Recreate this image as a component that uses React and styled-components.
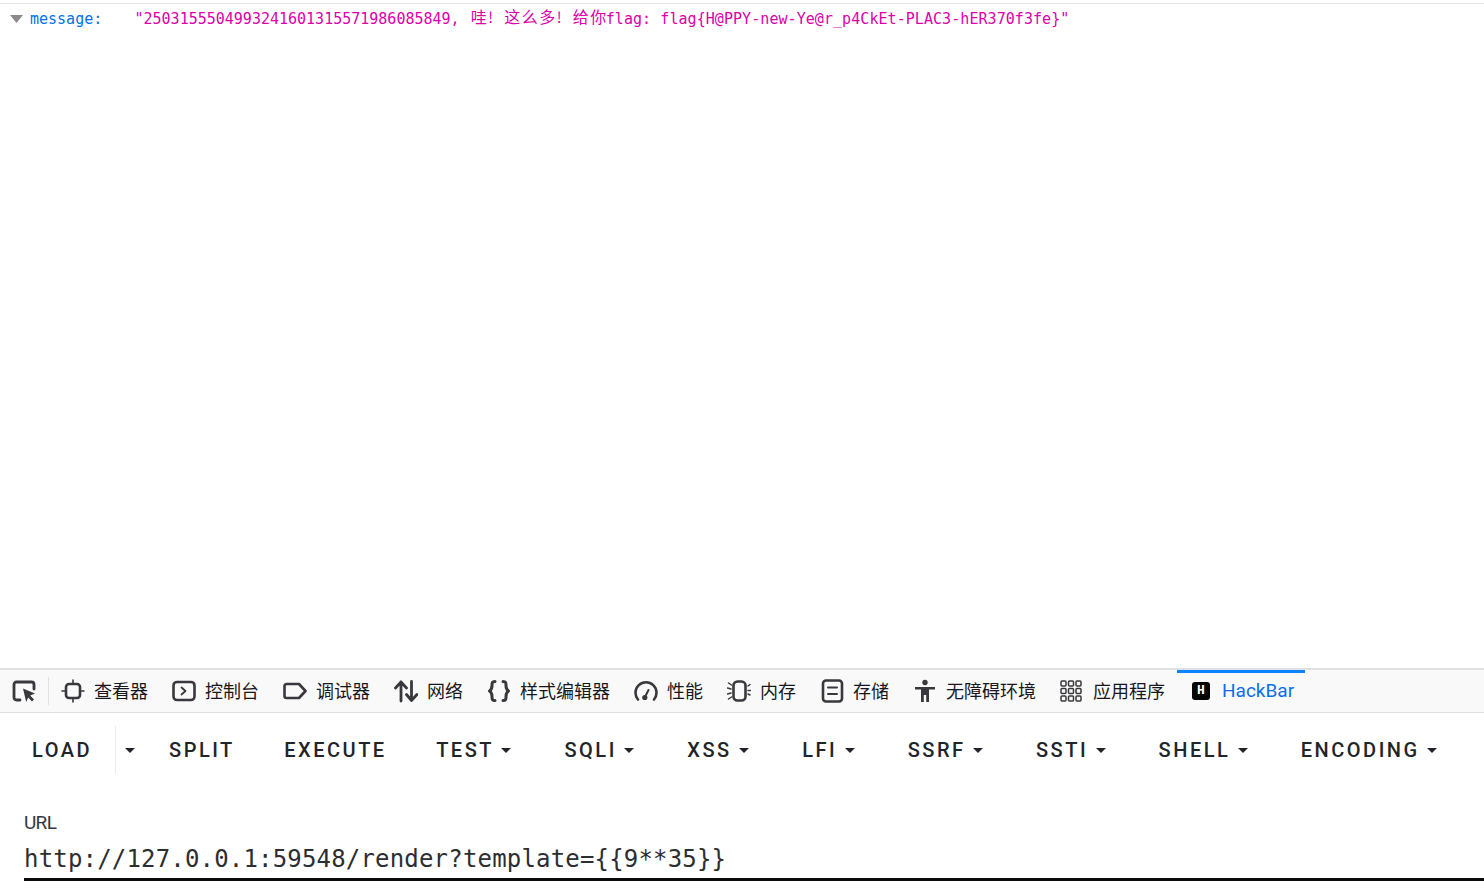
import React from "react";
import styled, { createGlobalStyle } from "styled-components";

const Global = createGlobalStyle`
  html, body { margin: 0; padding: 0; background: #fff; }
  body { font-family: "Noto Sans CJK SC", "Noto Sans", sans-serif; overflow: hidden; }
  #root { height: 892px; }
`;

const Page = styled.div`
  height: 892px;
  display: flex;
  flex-direction: column;
`;

const JsonPane = styled.main`
  flex: 1;
  padding-top: 3px;
`;

const JsonRow = styled.div`
  border-top: 1px solid #e4e4e6;
  height: 29px;
  display: flex;
  align-items: center;
  padding-left: 10px;
  font: 15px/20px "DejaVu Sans Mono", monospace;
  white-space: pre;
`;

const Twisty = styled.svg`
  width: 13px;
  height: 8px;
  margin-right: 7px;
  flex: none;
`;

const Key = styled.span`
  color: #0074e8;
  width: 104.5px;
  flex: none;
`;

const Value = styled.span`
  color: #dd00a9;
`;

const ValueTail = styled.span`
  letter-spacing: 0.06px;
`;

const Cjk = styled.span`
  display: inline-block;
  font: 400 16px/10px "Noto Sans CJK SC", sans-serif;
  letter-spacing: 1.5px;
  padding-left: 2px;
  margin-right: -2px;
  position: relative;
  top: -1px;
`;

const Bang = styled.span`
  display: inline-block;
  width: 7px;
  font: 400 15px/10px "Noto Sans CJK SC", sans-serif;
  position: relative;
  top: -1px;
  left: 2px;
`;

const DevBar = styled.nav`
  height: 42px;
  flex: none;
  display: flex;
  align-items: stretch;
  background: #f9f9fa;
  border-top: 2px solid #e0e0e2;
  border-bottom: 1px solid #e0e0e2;
`;

const Picker = styled.div`
  width: 49px;
  flex: none;
  display: flex;
  align-items: center;
  justify-content: center;
  padding-right: 1px;
  box-sizing: border-box;
  position: relative;
  &::after {
    content: "";
    position: absolute;
    right: 0;
    top: 7px;
    bottom: 7px;
    width: 1px;
    background: #e0e0e2;
  }
`;

const Tab = styled.div`
  display: flex;
  align-items: center;
  gap: 9px;
  padding: 0 12px;
  font-size: 18px;
  line-height: 24px;
  color: #18181a;
  white-space: nowrap;
`;

const ActiveTab = styled.div`
  display: flex;
  align-items: center;
  gap: 12px;
  padding: 0 11px 0 15px;
  font: 400 19px/24px "Roboto", "Liberation Sans", sans-serif;
  color: #0a6fe8;
  white-space: nowrap;
  position: relative;
  &::before {
    content: "";
    position: absolute;
    left: 0;
    right: 0;
    top: 0;
    height: 3px;
    background: #0a84ff;
  }
`;

const TabLabel = styled.span`
  position: relative;
  top: -1px;
`;

const TabIcon = styled.svg`
  width: 24px;
  height: 24px;
  flex: none;
  fill: none;
  stroke: #38383d;
  stroke-width: 2.6;
  stroke-linecap: round;
  stroke-linejoin: round;
`;

const HackIcon = styled.span`
  width: 18px;
  height: 18px;
  background: #050505;
  border-radius: 3px;
  display: flex;
  align-items: center;
  justify-content: center;
  color: #fff;
  font: 700 13px/18px "Liberation Mono", monospace;
  flex: none;
`;

const HackBar = styled.section`
  flex: none;
  height: 179px;
  display: flex;
  flex-direction: column;
  background: #fff;
`;

const Actions = styled.div`
  display: flex;
  align-items: center;
  height: 72px;
  margin-top: 1px;
  padding-left: 32px;
  font: 500 20px/24px "Roboto", sans-serif;
  letter-spacing: 2.5px;
  color: #212529;
`;

const Action = styled.div`
  display: flex;
  align-items: center;
  margin-right: 49.5px;
  white-space: nowrap;
`;

const LoadAction = styled(Action)`
  margin-right: 0;
`;

const LoadMenu = styled(Action)`
  margin: 0 31px 0 1px;
`;

const Caret = styled.i`
  width: 0;
  height: 0;
  margin: 0 3.5px 0 7.5px;
  border-left: 5.5px solid transparent;
  border-right: 5.5px solid transparent;
  border-top: 5.5px solid #212529;
`;

const SplitDivider = styled.div`
  flex: none;
  width: 1px;
  height: 48px;
  background: #ebebed;
  margin: 0 0 0 23px;
`;

const Field = styled.div`
  padding: 26px 0 0 24px;
  display: flex;
  flex-direction: column;
`;

const FieldLabel = styled.label`
  font: 400 19px/22px "Roboto", sans-serif;
  letter-spacing: -0.7px;
  color: #33383d;
`;

const FieldValue = styled.div`
  font: 400 24px/32px "DejaVu Sans Mono", monospace;
  letter-spacing: 0.18px;
  color: #2c2e31;
  margin-top: 9px;
  height: 35px;
  border-bottom: 3px solid #0b0b0b;
  white-space: nowrap;
`;

const grid = [2, 9.5, 17].flatMap((y) => [0.5, 8, 15.5].map((x) => [x, y]));

const tabs = [
  ["查看器", <><rect x="5" y="5" width="14" height="14" rx="3" /><path d="M12 1V5M12 19v4M1 12H5M19 12h4" strokeWidth="1.6" /></>],
  ["控制台", <><rect x="1.500" y="3" width="21" height="18" rx="3.500" /><path d="M9.500 8.500l4 3.500-4 3.500" strokeWidth="1.800" /></>],
  ["调试器", <path d="M3.500 5h12.500l6.500 7-6.500 7H3.500A2 2 0 0 1 1.500 17V7A2 2 0 0 1 3.500 5z" />],
  ["网络", <path d="M7 22V3M1.500 9L7 3l5.500 6M17.500 2.500V21.500M12.500 15.500l5 6 5.500-6" strokeWidth="2.800" />],
  ["样式编辑器", <path d="M8 2.500C5 2.500 5 4 5 6.500S5 10.500 2.500 12C5 13.500 5 15 5 17.500S5 21.500 8 21.500M16 2.500c3 0 3 1.500 3 4s0 4 2.500 5.500C19 13.500 19 15 19 17.500s0 4-3 4" strokeWidth="3" />],
  ["性能", <><path d="M4 20.500A10.500 10.500 0 1 1 20 20.500" /><circle cx="10.800" cy="18.500" r="2.600" fill="#38383d" stroke="none" /><path d="M11.500 17l3-6" strokeWidth="2" /></>],
  ["内存", <><rect x="6.500" y="2.500" width="12" height="19" rx="4" /><path d="M4.500 6L1.500 4M4 10L.5 9M4 14l-3.500 1M4.500 18l-3 2M21 7l2-1.500M21 11.500H23.500M21 15l2 1" strokeWidth="1.500" /></>],
  ["存储", <><rect x="3" y="1.500" width="19" height="21" rx="3" /><path d="M8 8.500h9M8 15h9" strokeWidth="2" /></>],
  ["无障碍环境", <g fill="#38383d" stroke="none"><circle cx="12" cy="3.500" r="2.700" /><path d="M2 8h20v2.500h-6V23h-2.800v-7h-2.400v7H8V10.500H2z" /></g>],
  ["应用程序", <g strokeWidth="1.500">{grid.map(([x, y]) => <rect key={`${x}-${y}`} x={x + 0.5} y={y} width="5" height="5" rx="1" />)}</g>],
];

const actions = [
  ["SPLIT", false],
  ["EXECUTE", false],
  ["TEST", true],
  ["SQLI", true],
  ["XSS", true],
  ["LFI", true],
  ["SSRF", true],
  ["SSTI", true],
  ["SHELL", true],
  ["ENCODING", true],
];

export default function App() {
  return (
    <Page>
      <Global />
      <JsonPane>
        <JsonRow>
          <Twisty viewBox="0 0 13 8"><path d="M0 0h13L6.500 8z" fill="#8a8a8f" /></Twisty>
          <Key>message:</Key>
          <Value>
            {'"2503155504993241601315571986085849, '}<Cjk>哇</Cjk><Bang>!</Bang>{" "}<Cjk>这么多</Cjk><Bang>!</Bang>{" "}<Cjk>给你</Cjk><ValueTail>{'flag: flag{H@PPY-new-Ye@r_p4CkEt-PLAC3-hER370f3fe}"'}</ValueTail>
          </Value>
        </JsonRow>
      </JsonPane>
      <DevBar>
        <Picker>
          <TabIcon viewBox="0 0 24 24">
            <path d="M8 21H4.500A2.500 2.500 0 0 1 2 18.500v-13A2.500 2.500 0 0 1 4.500 3h15A2.500 2.500 0 0 1 22 5.500V10" strokeWidth="2.800" />
            <path d="M11 9.500l12 5-4.800 2 3.800 4-2 2-3.800-4-2 4.500z" fill="#38383d" stroke="none" />
          </TabIcon>
        </Picker>
        {tabs.map(([label, icon]) => (
          <Tab key={label}>
            <TabIcon viewBox="0 0 24 24">{icon}</TabIcon>
            <TabLabel>{label}</TabLabel>
          </Tab>
        ))}
        <ActiveTab>
          <HackIcon>H</HackIcon>
          HackBar
        </ActiveTab>
      </DevBar>
      <HackBar>
        <Actions>
          <LoadAction>LOAD</LoadAction>
          <SplitDivider />
          <LoadMenu><Caret /></LoadMenu>
          {actions.map(([label, caret]) => (
            <Action key={label}>
              {label}
              {caret && <Caret />}
            </Action>
          ))}
        </Actions>
        <Field>
          <FieldLabel>URL</FieldLabel>
          <FieldValue>{"http://127.0.0.1:59548/render?template={{9**35}}"}</FieldValue>
        </Field>
      </HackBar>
    </Page>
  );
}
